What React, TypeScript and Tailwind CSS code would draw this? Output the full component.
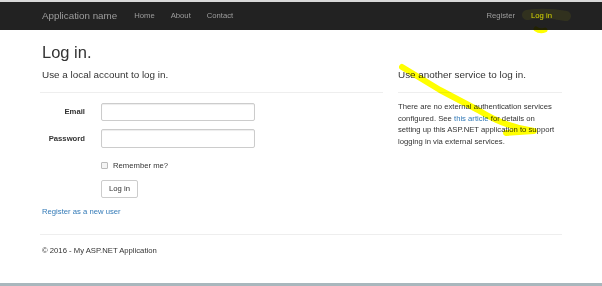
import React from "react"

export default function App() {
  return (
    <div className="relative w-[602px] h-[286px] overflow-hidden bg-white font-['Liberation_Sans',Arial,sans-serif] text-[#333]">
      {/* top strip + navbar */}
      <div className="h-[2px] bg-[#d9d9d9]" />
      <nav className="h-[28px] bg-[#222] flex items-center px-[42px] text-[#9d9d9d]">
        <span className="text-[9.8px]">Application name</span>
        <div className="flex ml-[17px] gap-[16px] text-[7.7px]">
          <span>Home</span>
          <span>About</span>
          <span>Contact</span>
        </div>
        <div className="flex ml-auto mr-[8px] gap-[16px] text-[7.7px]">
          <span>Register</span>
          <span className="text-[#d8d800]">Log in</span>
        </div>
      </nav>

      <main className="px-[40px]">
        <h2 className="mt-[12px] pl-[2px] text-[16.5px] leading-[20px]">Log in.</h2>

        <div className="flex mt-[6px]">
          {/* Left column - local account */}
          <section className="w-[343px]">
            <h4 className="pl-[2px] text-[9.9px] leading-[14px]">Use a local account to log in.</h4>
            <hr className="mt-[10px] border-[#eee]" />

            <div className="mt-[10px] flex flex-col gap-[8px] text-[7.7px]">
              <div className="flex items-center">
                <label className="w-[45px] text-right font-bold">Email</label>
                <input className="ml-[16px] w-[154px] h-[18px] border border-[#ccc] rounded-[2px] shadow-[inset_0_1px_1px_rgba(0,0,0,0.075)]" />
              </div>
              <div className="flex items-center">
                <label className="w-[45px] text-right font-bold">Password</label>
                <input type="password" className="ml-[16px] w-[154px] h-[19px] border border-[#ccc] rounded-[2px] shadow-[inset_0_1px_1px_rgba(0,0,0,0.075)]" />
              </div>
              <div className="flex items-center ml-[61px] mt-[4px]">
                <span className="w-[7px] h-[7px] border border-[#bbb] rounded-[1px] bg-[#f4f4f4]" />
                <span className="ml-[5px]">Remember me?</span>
              </div>
              <div className="ml-[61px]">
                <button className="h-[18px] px-[7px] bg-white border border-[#ccc] rounded-[2px] text-[7.7px] text-[#333]">Log in</button>
              </div>
            </div>

            <p className="mt-[8px] pl-[2px] text-[7.7px] text-[#337ab7]">Register as a new user</p>
          </section>

          {/* Right column - external services */}
          <section className="ml-[15px] flex-1">
            <h4 className="text-[9.9px] leading-[14px]">Use another service to log in.</h4>
            <hr className="mt-[10px] border-[#eee]" />
            <p className="mt-[8px] w-[157px] text-[7.7px] leading-[11.5px]">
              There are no external authentication services configured. See{" "}
              <span className="text-[#337ab7]">this article</span> for details on setting up this ASP.NET application to support logging in via external services.
            </p>
          </section>
        </div>

        <hr className="mt-[17px] border-[#eee]" />
        <footer className="mt-[10px] pl-[2px] text-[7.7px]">© 2016 - My ASP.NET Application</footer>
      </main>

      {/* bottom window edge */}
      <div className="absolute left-0 right-0 bottom-0 h-[3px] bg-[#a9b7bd]" />

      {/* highlighter marks */}
      <svg className="absolute inset-0 pointer-events-none" width="602" height="286">
        <path d="M527 15 Q545 12 566 16" fill="none" stroke="#d8d800" strokeWidth="10" strokeLinecap="round" opacity="0.09" />
      </svg>
      <svg className="absolute inset-0 pointer-events-none mix-blend-multiply" width="602" height="286">
        <path d="M402 67 L440 90 L478 110 Q505 127 534 131 L506 133" fill="none" stroke="#ffff00" strokeWidth="6" strokeLinecap="round" strokeLinejoin="round" />
        <path d="M536 29 Q540 32 545 30" fill="none" stroke="#ffff00" strokeWidth="5" strokeLinecap="round" />
      </svg>
    </div>
  )
}
